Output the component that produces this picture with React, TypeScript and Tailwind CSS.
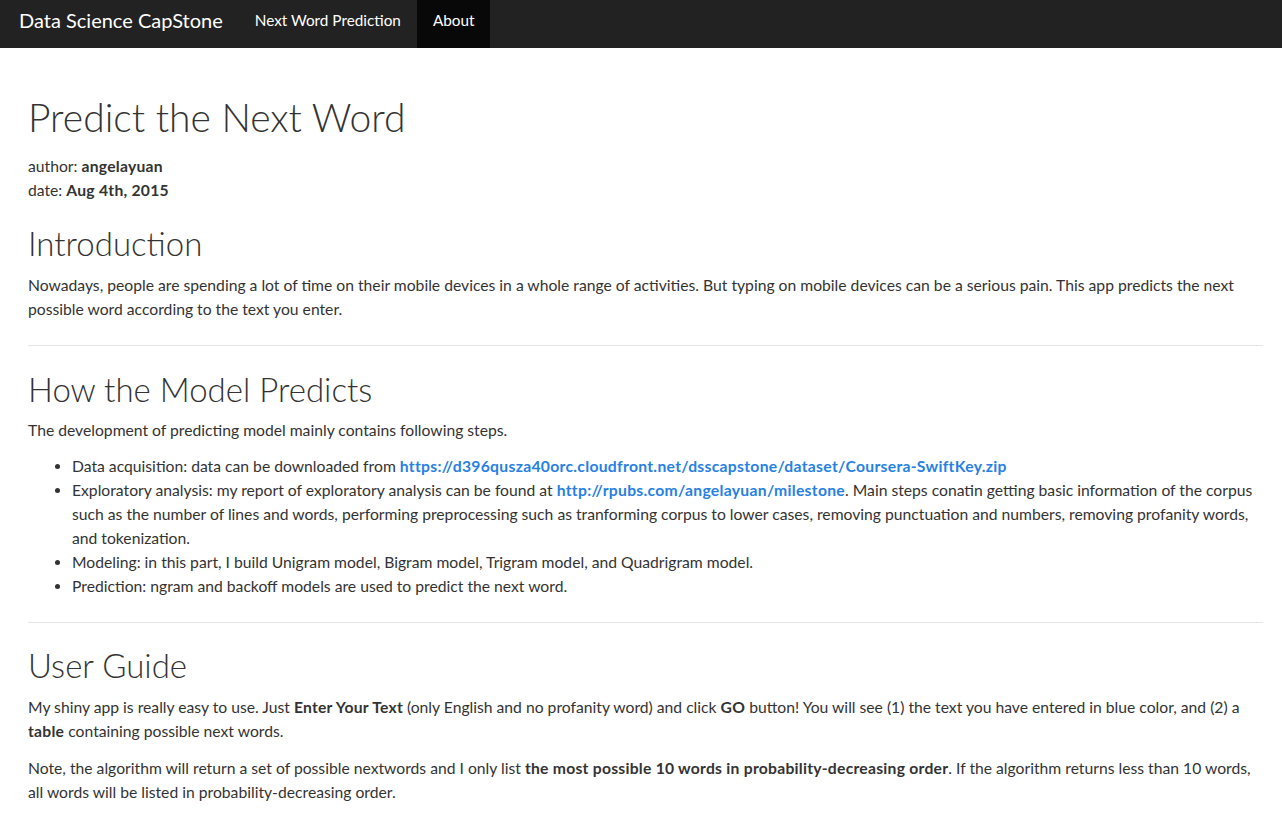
const font = { fontFamily: "Lato, 'Noto Sans', sans-serif" }

export default function App() {
  return (
    <div className="min-h-screen bg-white text-[#333333]" style={font}>
      <nav className="flex h-[48px] items-stretch bg-[#222222]">
        <div className="flex items-center pb-[8px] pl-[19px] pr-[16px] text-[20px] text-white">
          Data Science CapStone
        </div>
        <div className="flex items-center px-[16px] pb-[8px] text-[15.3px] text-white">Next Word Prediction</div>
        <div className="flex items-center bg-[#080808] px-[16px] pb-[8px] text-[15.3px] text-white">About</div>
      </nav>

      <main className="pl-[28px] pr-[19px] pt-[44px] text-[15.7px] leading-[24px] [&_b]:tracking-[0.25px] [&_a]:tracking-[0.3px]">
        <h1 className="text-[39px] font-light leading-[50px]">Predict the Next Word</h1>
        <p className="mt-[12px]">
          author: <b>angelayuan</b>
        </p>
        <p>
          date: <b>Aug 4th, 2015</b>
        </p>

        <h2 className="mt-[20px] text-[33px] font-light leading-[42px]">Introduction</h2>
        <p className="mt-[9px]">
          Nowadays, people are spending a lot of time on their mobile devices in a whole range of activities. But
          typing on mobile devices can be a serious pain. This app predicts the next possible word according to the
          text you enter.
        </p>

        <hr className="mt-[24px] border-t border-[#e5e5e5]" />

        <h2 className="mt-[22px] text-[33px] font-light leading-[42px]">How the Model Predicts</h2>
        <p className="mt-[8px]">The development of predicting model mainly contains following steps.</p>
        <ul className="mt-[12px] list-disc pl-[44px]">
          <li>
            Data acquisition: data can be downloaded from{" "}
            <a className="font-bold text-[#2780e3]" href="#">
              https://d396qusza40orc.cloudfront.net/dsscapstone/dataset/Coursera-SwiftKey.zip
            </a>
          </li>
          <li>
            Exploratory analysis: my report of exploratory analysis can be found at{" "}
            <a className="font-bold text-[#2780e3]" href="#">
              http://rpubs.com/angelayuan/milestone
            </a>
            . Main steps conatin getting basic information of the corpus such as the number of lines and words,
            performing preprocessing such as tranforming corpus to lower cases, removing punctuation and numbers,
            removing profanity words, and tokenization.
          </li>
          <li>Modeling: in this part, I build Unigram model, Bigram model, Trigram model, and Quadrigram model.</li>
          <li>Prediction: ngram and backoff models are used to predict the next word.</li>
        </ul>

        <hr className="mt-[24px] border-t border-[#e5e5e5]" />

        <h2 className="mt-[21px] text-[33px] font-light leading-[42px]">User Guide</h2>
        <p className="mt-[9px]">
          My shiny app is really easy to use. Just <b>Enter Your Text</b> (only English and no profanity word) and
          click <b>GO</b> button! You will see (1) the text you have entered in blue color, and (2) a <b>table</b>{" "}
          containing possible next words.
        </p>
        <p className="mt-[13px]">
          Note, the algorithm will return a set of possible nextwords and I only list{" "}
          <b>the most possible 10 words in probability-decreasing order</b>. If the algorithm returns less than 10
          words, all words will be listed in probability-decreasing order.
        </p>
      </main>
    </div>
  )
}
